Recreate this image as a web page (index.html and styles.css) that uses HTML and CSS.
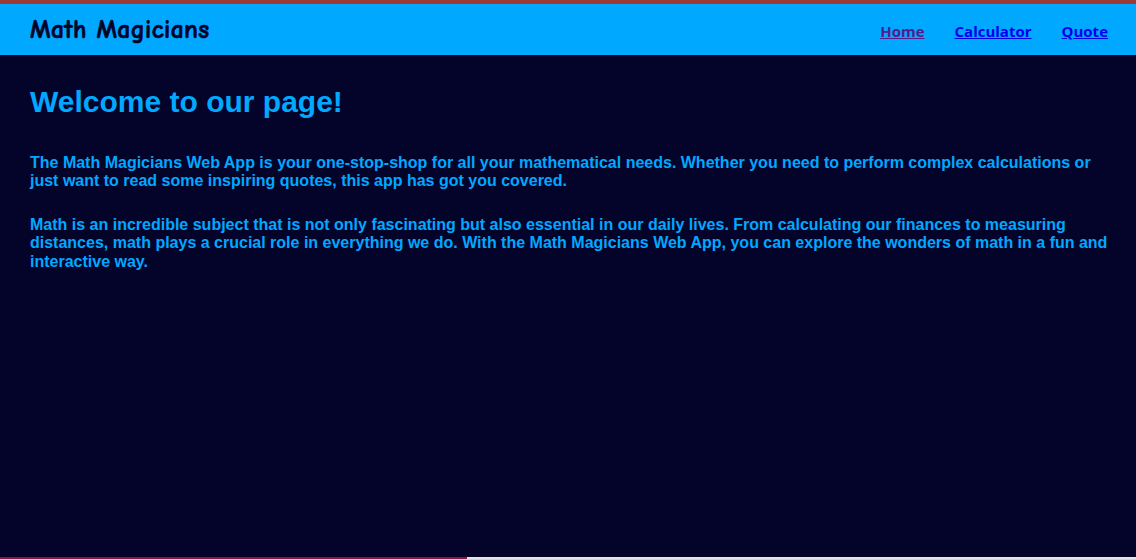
FILE: index.html
```html
<!DOCTYPE html>
<html lang="en">
<head>
<meta charset="utf-8">
<title>Math Magicians</title>
<link rel="stylesheet" href="styles.css">
</head>
<body>
<div class="app">
  <header class="topbar">
    <h2 class="brand">Math Magicians</h2>
    <nav class="nav">
      <a class="nav-link visited" href="#">Home</a>
      <a class="nav-link" href="#">Calculator</a>
      <a class="nav-link" href="#">Quote</a>
    </nav>
  </header>
  <main class="content">
    <h1 class="title">Welcome to our page!</h1>
    <p class="text">The Math Magicians Web App is your one-stop-shop for all your mathematical needs. Whether you need to perform complex calculations or just want to read some inspiring quotes, this app has got you covered.</p>
    <p class="text">Math is an incredible subject that is not only fascinating but also essential in our daily lives. From calculating our finances to measuring distances, math plays a crucial role in everything we do. With the Math Magicians Web App, you can explore the wonders of math in a fun and interactive way.</p>
  </main>
  <div class="bottom">
    <div class="bottom-left"></div>
    <div class="bottom-right"></div>
  </div>
</div>
</body>
</html>
```
FILE: styles.css
```css
html, body {
  margin: 0;
  padding: 0;
  height: 100%;
  background: #04042a;
}

.app {
  display: flex;
  flex-direction: column;
  height: 100%;
  border-top: 4px solid #9c3b33;
  box-sizing: border-box;
}

.topbar {
  display: flex;
  align-items: center;
  justify-content: space-between;
  height: 51px;
  flex: none;
  background: #00a8ff;
  padding: 0 28px 0 30px;
}

.brand {
  margin: 0;
  font-family: "Comic Sans MS", "Comic Neue", "DejaVu Sans", sans-serif;
  font-size: 25.5px;
  font-weight: bold;
  color: #04042a;
  letter-spacing: 0.4px;
  -webkit-text-stroke: 0.7px #04042a;
}

.nav {
  display: flex;
  gap: 30px;
  padding-top: 2px;
}

.nav-link {
  font-family: "Open Sans", "DejaVu Sans", sans-serif;
  font-size: 15px;
  font-weight: bold;
  color: #0000ee;
  text-decoration: underline;
}

.nav-link.visited {
  color: #551a8b;
}

.content {
  flex: 1;
  padding: 0 28px 0 30px;
  background: #04042a;
  border-bottom-left-radius: 6px;
}

.title {
  margin: 30px 0 35px;
  font-family: "Liberation Sans", Arial, sans-serif;
  font-size: 30px;
  font-weight: bold;
  color: #00a8ff;
}

.text {
  margin: 0 0 25px;
  font-family: "Liberation Sans", Arial, sans-serif;
  font-size: 16px;
  font-weight: bold;
  line-height: 18.4px;
  color: #00a8ff;
}

.bottom {
  display: flex;
  height: 2px;
  flex: none;
}

.bottom-left {
  width: 467px;
  background: #8a1444;
}

.bottom-right {
  flex: 1;
  background: #e4e4e8;
}
```
